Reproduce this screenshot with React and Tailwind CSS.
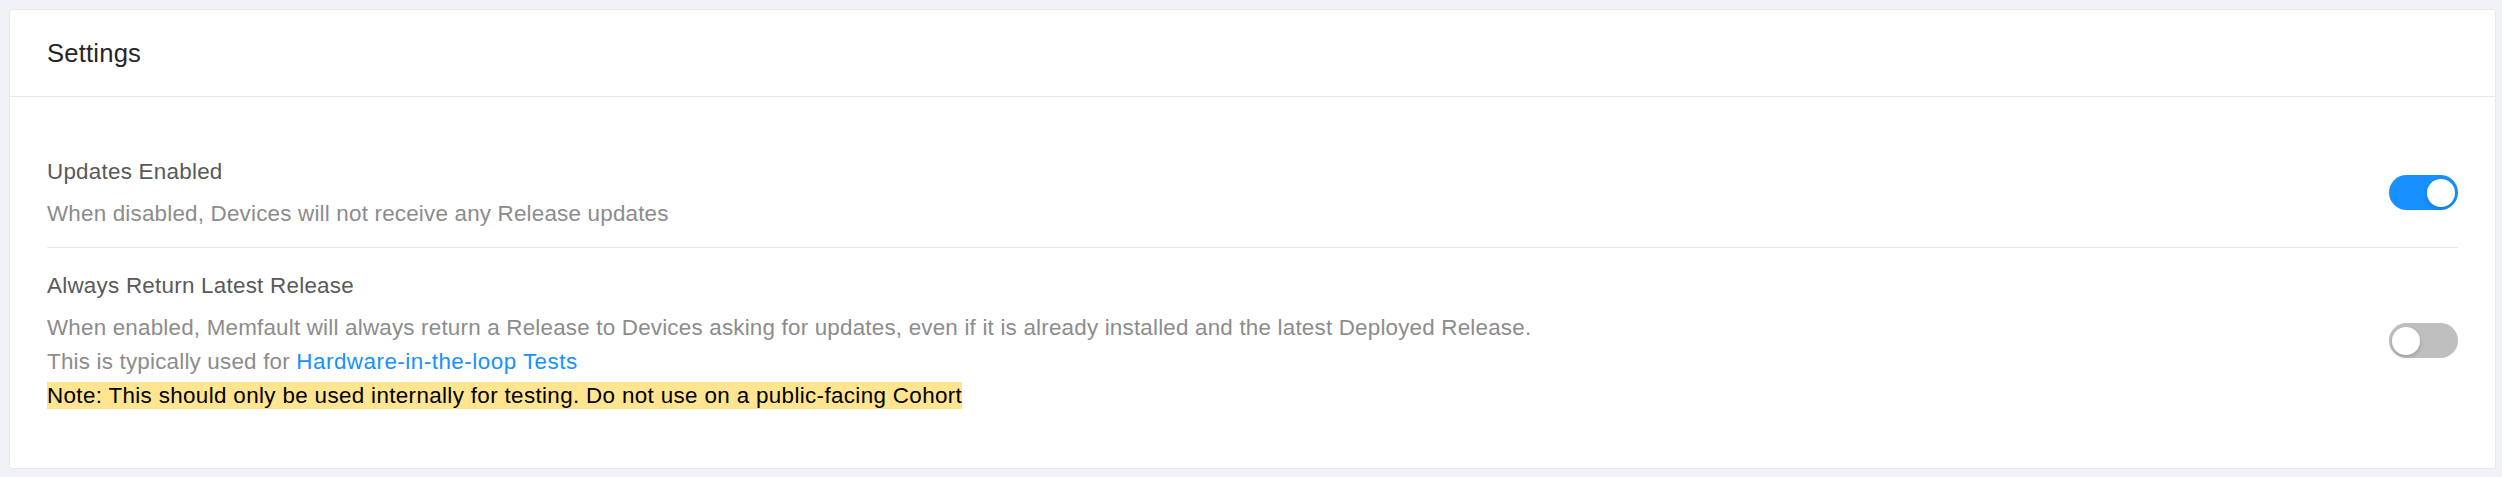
import React from "react";

function Toggle({ on }) {
  return (
    <div
      className={
        "relative h-[35px] w-[69px] shrink-0 rounded-full " +
        (on ? "bg-[#1890ff]" : "bg-[#bfbfbf]")
      }
    >
      <div
        className={
          "absolute top-[3.5px] h-[28px] w-[28px] rounded-full bg-white shadow-[0_2px_4px_rgba(0,35,11,0.2)] " +
          (on ? "right-[3px]" : "left-[3px]")
        }
      />
    </div>
  );
}

export default function App() {
  return (
    <div
      className="min-h-[477px] bg-[#f0f2f5] pl-[9px] pr-[6px] pt-[9px] pb-[7px]"
      style={{ fontFamily: '"Liberation Sans", Arial, sans-serif' }}
    >
      <div className="rounded-[3px] border border-[#e8e8e8] bg-white">
        <div className="flex h-[87px] items-center border-b border-[#e8e8e8] px-[37px]">
          <span className="text-[25.6px] font-medium leading-[35px] tracking-[0.2px] text-[#262626]">
            Settings
          </span>
        </div>
        <div className="px-[37px] pt-[38px] pb-[38px] text-[22.4px] tracking-[0.2px]">
          <div className="flex items-center border-b border-[#e8e8e8] pt-[19px] pb-[16px]">
            <div className="flex-1">
              <div className="leading-[35px] tracking-[0.25px] text-[#595959]">Updates Enabled</div>
              <div className="mt-[8px] leading-[34px] text-[#8c8c8c]">
                When disabled, Devices will not receive any Release updates
              </div>
            </div>
            <Toggle on />
          </div>
          <div className="flex items-center pt-[20px] pb-[17px]">
            <div className="flex-1">
              <div className="leading-[35px] tracking-[0.25px] text-[#595959]">Always Return Latest Release</div>
              <div className="mt-[8px] leading-[34px] text-[#8c8c8c]">
                <div>
                  When enabled, Memfault will always return a Release to Devices asking for updates, even if it is already installed and the latest Deployed Release.
                </div>
                <div>
                  This is typically used for{" "}
                  <a className="tracking-[0.5px] text-[#1890ff]" href="#">
                    Hardware-in-the-loop Tests
                  </a>
                </div>
                <div>
                  <span className="bg-[#ffe58f] py-[1px] tracking-[0.35px] text-black">
                    Note: This should only be used internally for testing. Do not use on a public-facing Cohort
                  </span>
                </div>
              </div>
            </div>
            <Toggle on={false} />
          </div>
        </div>
      </div>
    </div>
  );
}
